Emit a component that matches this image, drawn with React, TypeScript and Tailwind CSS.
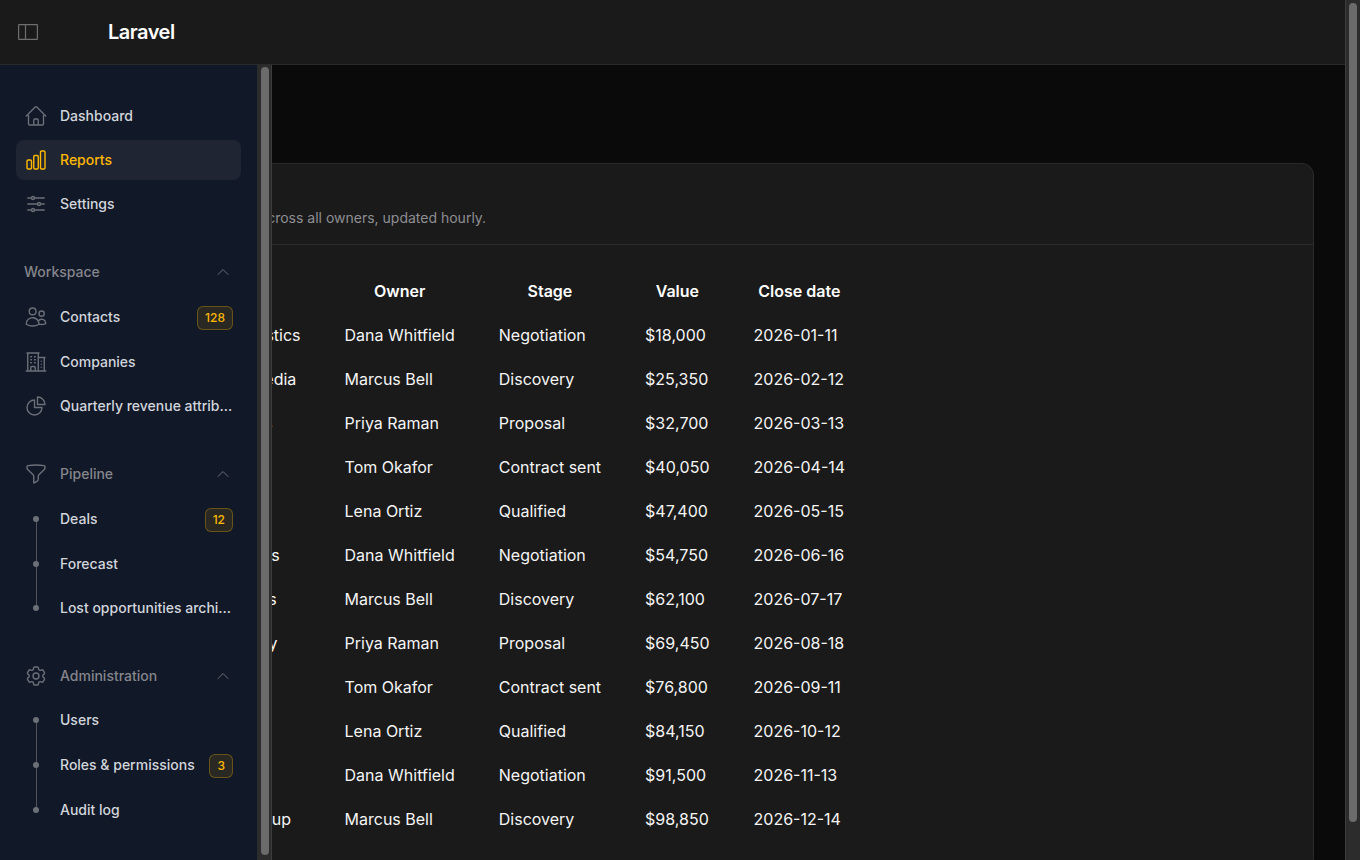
import React from "react";
import {
  HiOutlineHome,
  HiOutlineChartBar,
  HiOutlineAdjustmentsHorizontal,
  HiOutlineUsers,
  HiOutlineBuildingOffice2,
  HiOutlineChartPie,
  HiOutlineFunnel,
  HiOutlineCog6Tooth,
  HiOutlineChevronUp,
} from "react-icons/hi2";

const rows = [
  ["Northwind Freight & Logistics", "Dana Whitfield", "Negotiation", "$18,000", "2026-01-11"],
  ["Bluepeak Digital Sales Media", "Marcus Bell", "Discovery", "$25,350", "2026-02-12"],
  ["Harbor Mills Home Goods", "Priya Raman", "Proposal", "$32,700", "2026-03-13"],
  ["Atlas Group", "Tom Okafor", "Contract sent", "$40,050", "2026-04-14"],
  ["Orchid Labs", "Lena Ortiz", "Qualified", "$47,400", "2026-05-15"],
  ["Summit Marine Electronics", "Dana Whitfield", "Negotiation", "$54,750", "2026-06-16"],
  ["Cedar Ellis Home Supplies", "Marcus Bell", "Discovery", "$62,100", "2026-07-17"],
  ["Juniper Elm Home Joinery", "Priya Raman", "Proposal", "$69,450", "2026-08-18"],
  ["Halcyon Inc", "Tom Okafor", "Contract sent", "$76,800", "2026-09-11"],
  ["Vantage Co", "Lena Ortiz", "Qualified", "$84,150", "2026-10-12"],
  ["Keystone", "Dana Whitfield", "Negotiation", "$91,500", "2026-11-13"],
  ["Meridian Investments Group", "Marcus Bell", "Discovery", "$98,850", "2026-12-14"],
];

function Badge({ children }: { children: React.ReactNode }) {
  return (
    <span className="mt-0.5 ml-auto flex h-6 shrink-0 items-center rounded-md border border-amber-400/30 bg-amber-400/10 px-[7px] text-xs font-medium text-amber-400">
      {children}
    </span>
  );
}

function Item({
  icon: Icon,
  label,
  active,
  badge,
}: {
  icon: React.ComponentType<any>;
  label: string;
  active?: boolean;
  badge?: string;
}) {
  return (
    <div
      className={`flex items-center gap-3 rounded-lg px-2 ${badge ? "h-[42px]" : "h-10"} ${
        active ? "bg-white/[0.06] text-amber-400" : "text-gray-300"
      }`}
    >
      <Icon className={`size-6 shrink-0 [&_path]:[stroke-width:1.4] ${active ? "text-amber-400" : "text-[#6b7078]"}`} />
      <span className="truncate text-sm font-medium">{label}</span>
      {badge && <Badge>{badge}</Badge>}
    </div>
  );
}

function SubItem({ label, badge, last }: { label: string; badge?: string; last?: boolean }) {
  return (
    <div className={`relative flex items-center gap-3 rounded-lg px-2 ${badge ? "h-[42px]" : "h-10"} text-gray-300`}>
      {!last && <span className="absolute left-[19.5px] top-1/2 h-[calc(100%+4px)] w-px bg-zinc-600" />}
      <span className="flex size-6 shrink-0 items-center justify-center">
        <span className="relative size-1.5 rounded-full bg-[#6b7078]" />
      </span>
      <span className="truncate text-sm font-medium">{label}</span>
      {badge && <Badge>{badge}</Badge>}
    </div>
  );
}

function GroupHeader({ icon: Icon, label }: { icon?: React.ComponentType<any>; label: string }) {
  return (
    <div className="flex h-10 items-center gap-3 rounded-lg px-2 text-[#85858c]">
      {Icon && <Icon className="size-6 shrink-0 text-[#6b7078] [&_path]:[stroke-width:1.4]" />}
      <span className="truncate text-sm font-medium">{label}</span>
      <HiOutlineChevronUp className="mr-0.5 ml-auto size-4 shrink-0 text-[#6b7078]" />
    </div>
  );
}

export default function App() {
  return (
    <div className="flex h-screen overflow-hidden bg-[#0a0a0a] text-white" style={{ fontFamily: "Inter, sans-serif" }}>
      <div className="relative min-w-0 flex-1 overflow-y-auto">
        <header className="sticky top-0 z-10 flex h-[65px] items-center border-b border-[#2a2a2a] bg-[#1a1a1a]">
          <svg viewBox="0 0 20 16" className="ml-[18px] h-4 w-5 text-[#6e6e6e]" fill="none" stroke="currentColor" strokeWidth="1.2">
            <rect x="0.6" y="0.6" width="18.8" height="14.8" rx="0.5" />
            <path d="M7.5 0.6v14.8" />
          </svg>
          <span className="ml-[70px] text-xl font-semibold tracking-tight">Laravel</span>
        </header>

        <main className="pt-[33px] pr-[31px] pb-8 pl-8">
          <h1 className="h-[65px] text-2xl font-semibold">Reports</h1>
          <section className="rounded-xl border border-[#2a2a2a] bg-[#1a1a1a]">
            <div className="h-[81px] border-b border-[#2a2a2a] px-6 pt-4">
              <h2 className="text-base leading-5 font-semibold">Open deals</h2>
              <p className="mt-2 text-sm text-[#8e8e93]">Each open deal in the pipeline across all owners, updated hourly.</p>
            </div>
            <div className="pt-6 pr-6 pb-7 pl-[23px]">
              <table className="text-base">
                <thead>
                  <tr className="h-11">
                    {["Company", "Owner", "Stage", "Value", "Close date"].map((h) => (
                      <th key={h} className="px-[22px] font-semibold text-white">
                        {h}
                      </th>
                    ))}
                  </tr>
                </thead>
                <tbody>
                  {rows.map((r) => (
                    <tr key={r[1] + r[3]} className="h-11">
                      {r.map((c, i) => (
                        <td key={i} className="px-[22px] whitespace-nowrap text-neutral-100">
                          {c}
                        </td>
                      ))}
                    </tr>
                  ))}
                </tbody>
              </table>
            </div>
          </section>
        </main>
      </div>

      <div className="w-[15px] shrink-0 border-l border-[#3c3c3c] bg-[#2c2c2c] pt-[3px] pl-[3px]">
        <div className="h-[819px] w-2 rounded-full bg-[#6b6b6b]" />
      </div>

      <aside className="fixed top-[65px] bottom-0 left-0 z-20 flex w-[272px]">
        <div className="min-w-0 flex-1 overflow-y-auto bg-[#111827] px-4 pt-[31px] pb-8">
          <nav className="flex flex-col gap-1">
            <Item icon={HiOutlineHome} label="Dashboard" />
            <Item icon={HiOutlineChartBar} label="Reports" active />
            <Item icon={HiOutlineAdjustmentsHorizontal} label="Settings" />
          </nav>
          <nav className="mt-7 flex flex-col gap-1">
            <GroupHeader label="Workspace" />
            <Item icon={HiOutlineUsers} label="Contacts" badge="128" />
            <Item icon={HiOutlineBuildingOffice2} label="Companies" />
            <Item icon={HiOutlineChartPie} label="Quarterly revenue attribution" />
          </nav>
          <nav className="mt-7 flex flex-col gap-1">
            <GroupHeader icon={HiOutlineFunnel} label="Pipeline" />
            <SubItem label="Deals" badge="12" />
            <SubItem label="Forecast" />
            <SubItem label="Lost opportunities archive" last />
          </nav>
          <nav className="mt-7 flex flex-col gap-1">
            <GroupHeader icon={HiOutlineCog6Tooth} label="Administration" />
            <SubItem label="Users" />
            <SubItem label="Roles & permissions" badge="3" />
            <SubItem label="Audit log" last />
          </nav>
        </div>
        <div className="w-[15px] shrink-0 border-r border-[#3c3c3c] bg-[#2c2c2c] pt-0.5 pl-[3.5px]">
          <div className="h-[788px] w-2 rounded-full bg-[#6b6b6b]" />
        </div>
      </aside>
    </div>
  );
}
